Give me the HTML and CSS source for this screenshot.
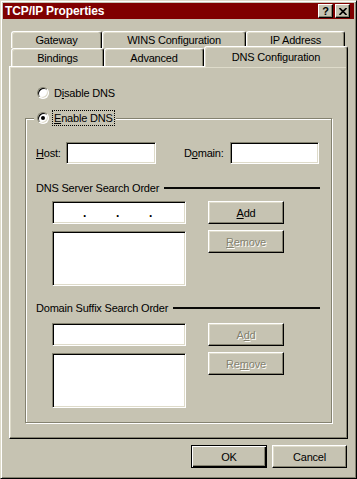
FILE: index.html
```html
<!DOCTYPE html>
<html>
<head>
<meta charset="utf-8">
<title>TCP/IP Properties</title>
<link rel="stylesheet" href="styles.css">
</head>
<body>
<div class="window">
  <div class="titlebar">
    <span class="title">TCP/IP Properties</span>
    <div class="tb-buttons">
      <span class="tb-btn help">?</span>
      <span class="tb-btn close"><svg width="8" height="7" viewBox="0 0 8 7"><path d="M0.5 0 L7.5 7 M7.5 0 L0.5 7" stroke="#000" stroke-width="1.6" fill="none"/></svg></span>
    </div>
  </div>
  <div class="body">
    <div class="tabs">
      <div class="tabrow row1">
        <div class="tab t-gateway">Gateway</div>
        <div class="tab t-wins">WINS Configuration</div>
        <div class="tab t-ip">IP Address</div>
      </div>
      <div class="tabrow row2">
        <div class="tab t-bind">Bindings</div>
        <div class="tab t-adv">Advanced</div>
        <div class="tab t-dns sel">DNS Configuration</div>
      </div>
    </div>
    <div class="panel">
      <div class="radio-row">
        <span class="radio"></span><span class="rlabel">D<u>i</u>sable DNS</span>
      </div>
      <div class="group">
        <div class="legend">
          <span class="radio checked"></span><span class="rlabel focus"><u>E</u>nable DNS</span>
        </div>
        <div class="host-row">
          <span class="lbl host-lbl"><u>H</u>ost:</span>
          <span class="field host-field"></span>
          <span class="lbl domain-lbl">D<u>o</u>main:</span>
          <span class="field domain-field"></span>
        </div>
        <div class="section-head head1"><span>DNS Server Search Order</span><span class="rule"></span></div>
        <div class="list-grid grid1">
          <div class="field ip"><span class="seg"></span><span class="dot">.</span><span class="seg"></span><span class="dot">.</span><span class="seg"></span><span class="dot">.</span><span class="seg"></span></div>
          <div class="btn"><u>A</u>dd</div>
          <div class="field listbox"></div>
          <div class="btn disabled"><u>R</u>emove</div>
        </div>
        <div class="section-head head2"><span>Domain Suffix Search Order</span><span class="rule"></span></div>
        <div class="list-grid grid2">
          <div class="field"></div>
          <div class="btn disabled">A<u>d</u>d</div>
          <div class="field listbox"></div>
          <div class="btn disabled">Re<u>m</u>ove</div>
        </div>
      </div>
    </div>
    <div class="footer">
      <div class="btn default">OK</div>
      <div class="btn cancel">Cancel</div>
    </div>
  </div>
</div>
</body>
</html>
```

FILE: styles.css
```css
* { box-sizing: border-box; }
html, body { margin: 0; padding: 0; }
body {
  width: 357px;
  height: 479px;
  overflow: hidden;
  background: #c6c3b2;
  font-family: "Liberation Sans", Arial, sans-serif;
  font-size: 11px;
  letter-spacing: -0.2px;
  color: #000;
}
u { text-decoration: underline; text-underline-offset: 1px; }

.window {
  width: 357px;
  height: 479px;
  padding: 2px;
  border: 1px solid;
  border-color: #dedbca #000 #000 #dedbca;
  box-shadow: inset 1px 1px #fff, inset -1px -1px #848270;
  display: flex;
  flex-direction: column;
  background: #c6c3b2;
}

.titlebar {
  height: 16px;
  background: #800000;
  display: flex;
  align-items: center;
  justify-content: space-between;
  padding: 0 4px 0 2px;
}
.title {
  color: #fff;
  font-weight: bold;
  font-size: 12px;
  letter-spacing: -0.1px;
}
.tb-buttons { display: flex; gap: 2px; }
.tb-btn {
  width: 15px;
  height: 14px;
  background: #c6c3b2;
  border: 1px solid;
  border-color: #fff #000 #000 #fff;
  box-shadow: inset -1px -1px #848270;
  display: flex;
  align-items: center;
  justify-content: center;
  font-weight: bold;
  font-size: 11px;
  line-height: 1;
  letter-spacing: 0;
}

.body {
  flex: 1;
  padding: 12px 6px 8px 6px;
  display: flex;
  flex-direction: column;
}

.tabs { display: flex; flex-direction: column; }
.tabrow { display: flex; padding-left: 2px; }
.tab {
  border: 1px solid;
  border-bottom: none;
  border-color: #fff #000 transparent #fff;
  box-shadow: inset -1px 0 #848270, inset 1px 1px #dedbca;
  border-radius: 3px 3px 0 0;
  display: flex;
  align-items: center;
  justify-content: center;
  background: #c6c3b2;
  white-space: nowrap;
}
.row1 .tab { height: 17px; }
.row2 .tab { height: 18px; }
.t-gateway { width: 91px; }
.t-wins { width: 144px; }
.t-ip { width: 99px; }
.t-bind { width: 93px; }
.t-adv { width: 100px; }
.t-dns { width: 144px; }
.row2 .tab.sel {
  height: 21px;
  margin-top: -2px;
  margin-bottom: -1px;
  padding-bottom: 1px;
  position: relative;
  z-index: 1;
}

.panel {
  height: 373px;
  border: 1px solid;
  border-color: #fff #000 #000 #fff;
  box-shadow: inset -1px -1px #848270, inset 1px 1px #dedbca;
  padding-top: 20px;
  display: flex;
  flex-direction: column;
}

.radio-row {
  display: flex;
  align-items: center;
  height: 12px;
  margin-left: 27px;
}
.radio {
  width: 12px;
  height: 12px;
  flex: none;
  border-radius: 50%;
  background: #fff;
  border: 1px solid;
  border-color: #848270 #fff #fff #848270;
  box-shadow: inset 1px 1px #000, inset -1px -1px #dedbca;
  position: relative;
}
.radio.checked::after {
  content: "";
  position: absolute;
  left: 3px;
  top: 3px;
  width: 4px;
  height: 4px;
  border-radius: 50%;
  background: #000;
}
.rlabel { margin-left: 5px; white-space: nowrap; }

.group {
  margin: 19px 15px 0 15px;
  border: 1px solid #848270;
  box-shadow: inset 1px 1px #fff, 1px 1px #fff;
  padding: 0 11px 14px 10px;
  display: flex;
  flex-direction: column;
}
.legend {
  align-self: flex-start;
  display: flex;
  align-items: center;
  height: 16px;
  margin-top: -9px;
  margin-left: -2px;
  padding: 0 1px 0 3px;
  background: #c6c3b2;
}
.rlabel.focus {
  margin-left: 3px;
  height: 16px;
  padding: 0 1px;
  border: 1px dotted #000;
  display: flex;
  align-items: center;
}

.host-row {
  display: flex;
  align-items: center;
  height: 22px;
  margin-top: 16px;
}
.lbl { white-space: nowrap; }
.host-lbl { width: 30px; }
.host-field { width: 90px; height: 22px; }
.domain-lbl { width: 46px; margin-left: 28px; }
.domain-field { width: 89px; height: 22px; }

.field {
  background: #fff;
  border: 1px solid;
  border-color: #848270 #fff #fff #848270;
  box-shadow: inset 1px 1px #000, inset -1px -1px #dedbca;
}

.section-head {
  display: flex;
  align-items: center;
  height: 13px;
  white-space: nowrap;
}
.head1 { margin-top: 17px; }
.head2 { margin-top: 15px; }
.rule {
  flex: 1;
  height: 2px;
  background: #0a0a08;
  margin-left: 5px;
}

.list-grid {
  display: grid;
  grid-template-columns: 134px 76px;
  grid-template-rows: 23px 55px;
  column-gap: 22px;
  row-gap: 7px;
  margin-left: 16px;
}
.grid1 { margin-top: 7px; }
.grid2 { margin-top: 9px; }
.list-grid .btn { align-self: start; }
.list-grid .btn:nth-child(4) { margin-top: -1px; }

.ip {
  display: flex;
  align-items: center;
}
.seg { width: 30px; flex: none; }
.dot {
  width: 3px;
  text-align: center;
  letter-spacing: 0;
  flex: none;
  font-weight: bold;
  font-size: 12px;
}

.btn {
  width: 76px;
  height: 23px;
  background: #c6c3b2;
  border: 1px solid;
  border-color: #fff #000 #000 #fff;
  box-shadow: inset -1px -1px #848270, inset 1px 1px #dedbca;
  display: flex;
  align-items: center;
  justify-content: center;
  color: #000;
  white-space: nowrap;
}
.btn.disabled {
  color: #848270;
  text-shadow: 1px 1px #fff;
}
.btn.default {
  border-color: #000;
  box-shadow: inset 1px 1px #fff, inset -1px -1px #000, inset -2px -2px #848270;
}

.footer {
  display: flex;
  justify-content: flex-end;
  gap: 5px;
  margin-top: 6px;
  padding-right: 1px;
}
.btn.cancel { width: 75px; }
```
